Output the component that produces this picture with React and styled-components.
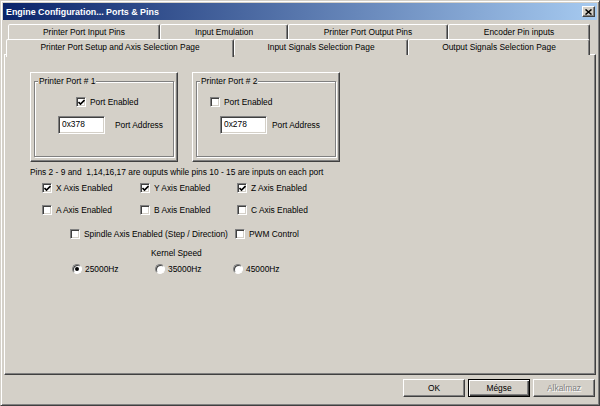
import { createGlobalStyle, styled } from "styled-components";

const GlobalStyle = createGlobalStyle`
  html, body {
    margin: 0;
    padding: 0;
    background: #d4d0c8;
  }
  * { box-sizing: border-box; }
`;

const Window = styled.div`
  width: 600px;
  height: 406px;
  background: #d4d0c8;
  border: 1px solid;
  border-color: #d4d0c8 #404040 #404040 #d4d0c8;
  box-shadow: inset 1px 1px #fff, inset -1px -1px #808080;
  padding: 2px;
  display: flex;
  flex-direction: column;
  font-family: "Liberation Sans", Arial, sans-serif;
  font-size: 8.4px;
  color: #000;
`;

const TitleBar = styled.div`
  height: 17px;
  flex: none;
  background: linear-gradient(to right, #0a246a, #a6caf0);
  display: flex;
  align-items: center;
  justify-content: space-between;
  padding: 0 2px 0 3px;
`;

const Title = styled.span`
  color: #fff;
  font-weight: bold;
  font-size: 8.9px;
`;

const CloseButton = styled.div`
  width: 13px;
  height: 11px;
  background: #d4d0c8;
  border: 1px solid;
  border-color: #fff #404040 #404040 #fff;
  box-shadow: inset -1px -1px #808080;
  display: flex;
  align-items: center;
  justify-content: center;
`;

const Body = styled.div`
  flex: 1;
  display: flex;
  flex-direction: column;
  padding: 4px 1px 0 1px;
`;

const TabRow = styled.div`
  display: flex;
  height: ${(p) => p.$h}px;
  margin: ${(p) => p.$m};
  position: relative;
  z-index: ${(p) => p.$z};
`;

const Tab = styled.div`
  width: ${(p) => p.$w}px;
  flex: none;
  background: #d4d0c8;
  border: 1px solid;
  border-bottom: none;
  border-color: #fff #404040 transparent #fff;
  border-radius: 2px 2px 0 0;
  box-shadow: inset -1px 0 #808080;
  display: flex;
  align-items: center;
  justify-content: center;
  padding-bottom: ${(p) => (p.$active ? 4 : 1)}px;
  height: ${(p) => (p.$active ? "calc(100% + 2px)" : "100%")};
  white-space: nowrap;
`;

const Panel = styled.div`
  height: 321px;
  flex: none;
  border: 1px solid;
  border-color: #fff #404040 #404040 #fff;
  box-shadow: inset -1px -1px #808080;
  padding: 17px 0 0 25px;
  display: flex;
  flex-direction: column;
`;

const GroupRow = styled.div`
  display: flex;
  gap: 14px;
`;

const GroupFrame = styled.div`
  width: 148px;
  height: 90px;
  border: 1px solid;
  border-color: #fff #404040 #404040 #fff;
  box-shadow: inset -1px -1px #808080;
  padding: 3px 3px 4px 3px;
  display: flex;
`;

const GroupBox = styled.fieldset`
  flex: 1;
  margin: 0;
  padding: 6px 0 0 0;
  border: 1px solid #808080;
  box-shadow: 1px 1px 0 #fff, inset 1px 1px 0 #fff;
  display: flex;
  flex-direction: column;
  min-width: 0;
`;

const Legend = styled.legend`
  padding: 0 1px;
  margin-left: 3px;
  background: #d4d0c8;
  line-height: 10px;
`;

const BoxRow = styled.div`
  display: flex;
  align-items: center;
  padding-left: ${(p) => p.$left}px;
  height: ${(p) => p.$h}px;
  gap: ${(p) => p.$gap || 4}px;
`;

const TextBox = styled.div`
  width: 47px;
  height: 18px;
  background: #fff;
  border: 1px solid;
  border-color: #808080 #fff #fff #808080;
  box-shadow: inset 1px 1px #404040, inset -1px -1px #d4d0c8;
  padding: 2px 0 0 3px;
`;

const Note = styled.div`
  margin-top: 5px;
  height: 10px;
  line-height: 10px;
  white-space: nowrap;
`;

const AxisGrid = styled.div`
  display: grid;
  grid-template-columns: 98px 97px 98px;
  grid-auto-rows: 22px;
  margin-left: 12px;
`;

const Line = styled.div`
  display: flex;
  align-items: center;
  height: ${(p) => p.$h}px;
  margin: ${(p) => p.$m};
`;

const Option = styled.label`
  display: flex;
  align-items: center;
  gap: ${(p) => p.$gap || 4}px;
  width: ${(p) => (p.$w ? `${p.$w}px` : "auto")};
  white-space: nowrap;
`;

const CheckSquare = styled.span`
  width: 10px;
  height: 10px;
  flex: none;
  background: #fff;
  border: 1px solid;
  border-color: #808080 #fff #fff #808080;
  box-shadow: inset 1px 1px #404040, inset -1px -1px #d4d0c8;
  display: flex;
  align-items: center;
  justify-content: center;
`;

const RadioCircle = styled.span`
  width: 10px;
  height: 10px;
  flex: none;
  border-radius: 50%;
  background: #fff;
  border: 1px solid;
  border-color: #808080 #fff #fff #808080;
  box-shadow: inset 1px 1px #404040;
  display: flex;
  align-items: center;
  justify-content: center;
`;

const RadioDot = styled.span`
  width: 4px;
  height: 4px;
  border-radius: 50%;
  background: #000;
`;

const ButtonRow = styled.div`
  height: 27px;
  flex: none;
  display: flex;
  justify-content: flex-end;
  align-items: flex-start;
  padding: 4px 1px 0 0;
  gap: 3px;
`;

const Button = styled.div`
  width: 62px;
  height: 18px;
  background: #d4d0c8;
  border: 1px solid;
  border-color: ${(p) => (p.$default ? "#000" : "#fff #404040 #404040 #fff")};
  box-shadow: ${(p) =>
    p.$default
      ? "inset 1px 1px #fff, inset -1px -1px #404040, inset -2px -2px #808080"
      : "inset -1px -1px #808080"};
  display: flex;
  align-items: center;
  justify-content: center;
  color: ${(p) => (p.$disabled ? "#808080" : "#000")};
  text-shadow: ${(p) => (p.$disabled ? "1px 1px 0 #fff" : "none")};
`;

function Checkbox({ checked, label, w }) {
  return (
    <Option $w={w}>
      <CheckSquare>
        {checked && (
          <svg width="7" height="7" viewBox="0 0 7 7">
            <path d="M0.5 3 L2.5 5 L6.5 1" stroke="#000" strokeWidth="1.6" fill="none" />
          </svg>
        )}
      </CheckSquare>
      {label}
    </Option>
  );
}

function Radio({ checked, label, w }) {
  return (
    <Option $w={w} $gap={3}>
      <RadioCircle>{checked && <RadioDot />}</RadioCircle>
      {label}
    </Option>
  );
}

const backTabs = [
  ["Printer Port Input Pins", 152],
  ["Input Emulation", 128],
  ["Printer Port Output Pins", 160],
  ["Encoder Pin inputs", 142],
];

const frontTabs = [
  ["Printer Port Setup and Axis Selection Page", 228, true],
  ["Input Signals Selection Page", 174],
  ["Output Signals Selection Page", 182],
];

function PortGroup({ title, enabled, address, checkLeft, labelGap }) {
  return (
    <GroupFrame>
      <GroupBox>
        <Legend>{title}</Legend>
        <BoxRow $left={checkLeft} $h={20}>
          <Checkbox checked={enabled} label="Port Enabled" />
        </BoxRow>
        <BoxRow $left={23} $h={26} $gap={labelGap}>
          <TextBox>{address}</TextBox>
          <span>Port Address</span>
        </BoxRow>
      </GroupBox>
    </GroupFrame>
  );
}

export default function App() {
  return (
    <>
      <GlobalStyle />
      <Window>
        <TitleBar>
          <Title>Engine Configuration... Ports &amp; Pins</Title>
          <CloseButton>
            <svg width="7" height="6" viewBox="0 0 7 6">
              <path d="M0.5 0.5 L6.5 5.5 M6.5 0.5 L0.5 5.5" stroke="#000" strokeWidth="1.5" />
            </svg>
          </CloseButton>
        </TitleBar>
        <Body>
          <TabRow $h={16} $m="0 4px 0 4px" $z={0}>
            {backTabs.map(([t, w]) => (
              <Tab key={t} $w={w}>{t}</Tab>
            ))}
          </TabRow>
          <TabRow $h={16} $m="-1px 2px -1px 2px" $z={2}>
            {frontTabs.map(([t, w, a]) => (
              <Tab key={t} $w={w} $active={a}>{t}</Tab>
            ))}
          </TabRow>
          <Panel>
            <GroupRow>
              <PortGroup title="Printer Port # 1" enabled address="0x378" checkLeft={41} labelGap={10} />
              <PortGroup title="Printer Port # 2" address="0x278" checkLeft={13} labelGap={5} />
            </GroupRow>
            <Note>Pins 2 - 9 and&nbsp; 1,14,16,17 are ouputs while pins 10 - 15 are inputs on each port</Note>
            <AxisGrid>
              <Checkbox checked label="X Axis Enabled" />
              <Checkbox checked label="Y Axis Enabled" />
              <Checkbox checked label="Z Axis Enabled" />
              <Checkbox label="A Axis Enabled" />
              <Checkbox label="B Axis Enabled" />
              <Checkbox label="C Axis Enabled" />
            </AxisGrid>
            <Line $h={24} $m="1px 0 0 40px">
              <Checkbox label="Spindle Axis Enabled (Step / Direction)" w={165} />
              <Checkbox label="PWM Control" />
            </Line>
            <Line $h={14} $m="0 0 0 121px">Kernel Speed</Line>
            <Line $h={18} $m="0 0 0 42px">
              <Radio checked label="25000Hz" w={83} />
              <Radio label="35000Hz" w={78} />
              <Radio label="45000Hz" />
            </Line>
          </Panel>
          <ButtonRow>
            <Button>OK</Button>
            <Button $default>Mégse</Button>
            <Button $disabled>Alkalmaz</Button>
          </ButtonRow>
        </Body>
      </Window>
    </>
  );
}
